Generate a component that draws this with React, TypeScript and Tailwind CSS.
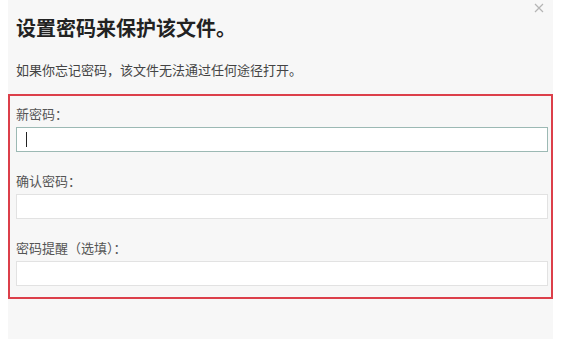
// Diálogo para poner contraseña a un archivo.
export default function App() {
  const campos = [
    { label: '新密码：', foco: true },
    { label: '确认密码：', foco: false },
    { label: '密码提醒（选填）：', foco: false },
  ]

  return (
    <div
      className="h-[339px] w-full bg-white"
      style={{ fontFamily: '"Noto Sans CJK SC", "Noto Sans", sans-serif' }}
    >
      <div className="relative ml-2 h-full w-[545px] bg-[#f7f7f7]">
        <button
          type="button"
          aria-label="关闭"
          className="absolute right-[8px] top-[2px] flex h-[12px] w-[12px] items-center justify-center text-[#b5b5b5]"
        >
          <svg width="10" height="10" viewBox="0 0 10 10" fill="none" stroke="currentColor" strokeWidth="1.2" aria-hidden="true">
            <path d="M1 1l8 8M9 1l-8 8" />
          </svg>
        </button>

        <div className="px-2 pt-[14px]">
          <h1 className="text-[20px] font-bold leading-[28px] text-[#222]">设置密码来保护该文件。</h1>
          <p className="mt-[19px] text-[13px] leading-[18px] text-[#444]">
            如果你忘记密码，该文件无法通过任何途径打开。
          </p>
        </div>

        <div className="mt-[15px] flex flex-col gap-[19px] border-2 border-[#dc3f4a] pb-[11px] pl-[6px] pr-[3px] pt-[8px]">
          {campos.map((c) => (
            <div key={c.label} className="flex flex-col">
              <label className="text-[13px] leading-[20px] text-[#555]">{c.label}</label>
              <div
                className={`mt-[3px] flex h-[25px] items-center border bg-white ${
                  c.foco ? 'border-[#9cb9b4]' : 'border-[#e2e2e2]'
                }`}
              >
                {c.foco && <span className="ml-[9px] h-[15px] w-px bg-[#222]" />}
              </div>
            </div>
          ))}
        </div>
      </div>
    </div>
  )
}
